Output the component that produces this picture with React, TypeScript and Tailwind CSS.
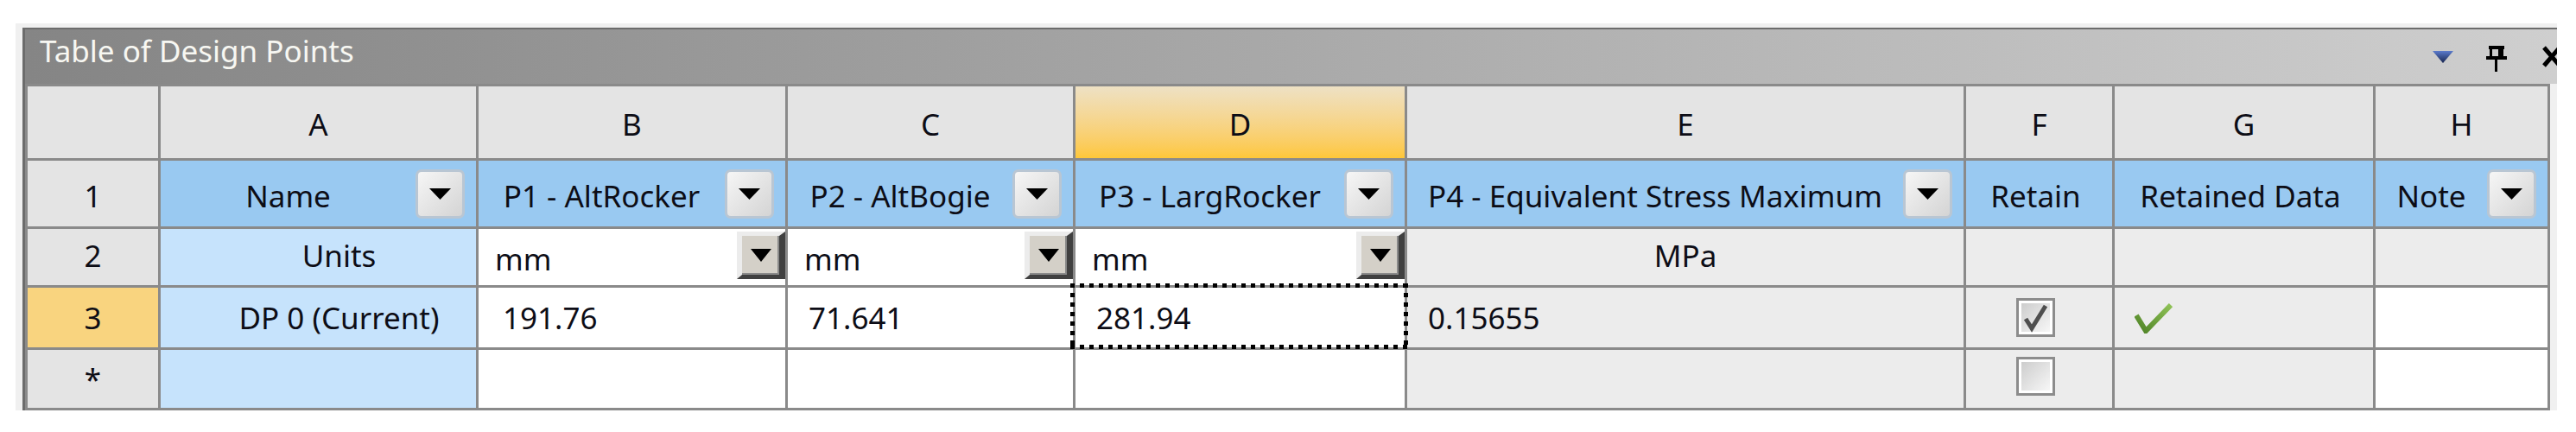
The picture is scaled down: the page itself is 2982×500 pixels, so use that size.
import React from "react";

function HeadDrop() {
  return (
    <div className="mr-[13px] flex h-[57px] w-[57px] shrink-0 items-center justify-center rounded-[7px] border-[3px] border-[#b9c6d3] bg-linear-to-br from-[#f6f6f6] to-[#d4d4d4]">
      <svg width="25" height="13" viewBox="0 0 25 13">
        <polygon points="0,0 25,0 12.5,13" fill="#000" />
      </svg>
    </div>
  );
}

function UnitDrop() {
  return (
    <div className="mt-[3px] flex h-[55px] w-[56px] shrink-0 items-center justify-center self-start border-t-[5px] border-r-[7px] border-b-[5px] border-l-[6px] border-t-[#ececec] border-r-[#404040] border-b-[#404040] border-l-[#ececec] bg-[#d4d0c8] shadow-[inset_-2px_-2px_0_#8a8a8a]">
      <svg width="24" height="15" viewBox="0 0 24 15">
        <polygon points="0,0 24,0 12,15" fill="#000" />
      </svg>
    </div>
  );
}

function Checkbox({ checked }: { checked?: boolean }) {
  return (
    <div className="relative h-[45px] w-[45px] border-[3px] border-[#8c8c8c] bg-white p-[3px]">
      <div className="h-full w-full bg-linear-to-br from-[#cdcdcd] to-[#f7f7f7]" />
      {checked && (
        <svg className="absolute left-0 top-0" width="39" height="39" viewBox="0 0 39 39">
          <path d="M8 21 L15 32 L31 6" fill="none" stroke="#4f4f4f" strokeWidth="5" />
        </svg>
      )}
    </div>
  );
}

function GreenCheck() {
  return (
    <svg width="44" height="36" viewBox="0 0 44 36">
      <defs>
        <linearGradient id="gc" x1="0" y1="1" x2="1" y2="0">
          <stop offset="0" stopColor="#4e8226" />
          <stop offset="1" stopColor="#8fc256" />
        </linearGradient>
      </defs>
      <path d="M2 15 L13 33 L42 3" fill="none" stroke="url(#gc)" strokeWidth="6" />
    </svg>
  );
}

const txt = "text-[35px] leading-[35px] text-[#0d0d16]";

export default function App() {
  const letters = ["A", "B", "C", "D", "E", "F", "G", "H"];
  return (
    <div className="h-[500px] w-[2982px] bg-white pl-[18px] pt-[27px] font-['Noto_Sans',sans-serif]">
      <div className="h-[448px] w-[2942px] overflow-hidden bg-[#f0f0f0] pl-[8px] pt-[5px]">
        <div className="h-full border-l-[3px] border-t-[2px] border-[#6c6c6c]">
          {/* Title bar */}
          <div className="flex h-[63px] items-center bg-linear-to-r from-[#858585] via-[#a9a9a9] to-[#cfcfcf]">
            <span className="pb-[14px] pl-[17px] text-[35px] leading-[35px] text-[#f7f7f2]">
              Table of Design Points
            </span>
            <div className="ml-auto mr-[-6px] flex items-center">
              <svg width="24" height="14" viewBox="0 0 24 14" className="mr-[38px]">
                <defs>
                  <linearGradient id="bt" x1="0" y1="0" x2="0" y2="1">
                    <stop offset="0" stopColor="#5b7bcc" />
                    <stop offset="1" stopColor="#17254f" />
                  </linearGradient>
                </defs>
                <polygon points="0,0 24,0 12,14" fill="url(#bt)" />
              </svg>
              <svg width="24" height="30" viewBox="0 0 24 30" className="mr-[40px] mt-[5px]">
                <rect x="3" y="0" width="18" height="4" fill="#000" />
                <rect x="4" y="0" width="3" height="14" fill="#000" />
                <rect x="14" y="0" width="6" height="14" fill="#000" />
                <rect x="0" y="12" width="24" height="4" fill="#000" />
                <rect x="10" y="16" width="3" height="14" fill="#000" />
              </svg>
              <svg width="24" height="27" viewBox="0 0 24 27">
                <path d="M3 3 L21 24 M21 3 L3 24" stroke="#000" strokeWidth="5" />
              </svg>
            </div>
          </div>

          {/* Grid */}
          <div
            className={`grid w-fit grid-cols-[151px_365px_355px_330px_381px_644px_169px_299px_199px] grid-rows-[83px_76px_65px_69px_67px] gap-[3px] bg-[#8a8a8a] p-[3px] ${txt}`}
          >
            {/* Header row */}
            <div className="bg-[#e4e4e4]" />
            {letters.map((l) => (
              <div
                key={l}
                className={
                  l === "D"
                    ? "flex items-center justify-center bg-linear-to-b from-[#eee1c4] to-[#fec737] pt-[4px]"
                    : "flex items-center justify-center bg-[#e4e4e4] pt-[4px]"
                }
              >
                {l}
              </div>
            ))}

            {/* Row 1 */}
            <div className="flex items-center justify-center bg-[#e4e4e4] pt-[5px]">1</div>
            <div className="flex items-center bg-[#99c9f1]">
              <span className="flex-1 pt-[5px] text-center">Name</span>
              <HeadDrop />
            </div>
            <div className="flex items-center bg-[#99c9f1]">
              <span className="flex-1 pt-[5px] text-center">P1 - AltRocker</span>
              <HeadDrop />
            </div>
            <div className="flex items-center bg-[#99c9f1]">
              <span className="flex-1 pt-[5px] text-center">P2 - AltBogie</span>
              <HeadDrop />
            </div>
            <div className="flex items-center bg-[#99c9f1]">
              <span className="flex-1 pt-[5px] text-center">P3 - LargRocker</span>
              <HeadDrop />
            </div>
            <div className="flex items-center bg-[#99c9f1]">
              <span className="flex-1 pt-[5px] text-center">P4 - Equivalent Stress Maximum</span>
              <HeadDrop />
            </div>
            <div className="flex items-center justify-center bg-[#99c9f1] pr-[8px] pt-[5px]">Retain</div>
            <div className="flex items-center justify-center bg-[#99c9f1] pr-[8px] pt-[5px]">Retained Data</div>
            <div className="flex items-center bg-[#99c9f1]">
              <span className="flex-1 pt-[5px] text-center">Note</span>
              <HeadDrop />
            </div>

            {/* Row 2 */}
            <div className="flex items-center justify-center bg-[#e4e4e4] pb-[4px]">2</div>
            <div className="flex items-center justify-center bg-[#c6e3fc] pb-[4px] pl-[48px]">Units</div>
            <div className="flex items-center bg-white">
              <span className="flex-1 pl-[19px] pt-[4px]">mm</span>
              <UnitDrop />
            </div>
            <div className="flex items-center bg-white">
              <span className="flex-1 pl-[19px] pt-[4px]">mm</span>
              <UnitDrop />
            </div>
            <div className="flex items-center bg-white">
              <span className="flex-1 pl-[19px] pt-[4px]">mm</span>
              <UnitDrop />
            </div>
            <div className="flex items-center justify-center bg-[#ececec] pb-[4px]">MPa</div>
            <div className="bg-[#ececec]" />
            <div className="bg-[#ececec]" />
            <div className="bg-[#ececec]" />

            {/* Row 3 */}
            <div className="flex items-center justify-center bg-[#f9d47f]">3</div>
            <div className="flex items-center justify-center bg-[#c6e3fc] pl-[48px]">DP 0 (Current)</div>
            <div className="flex items-center bg-white pl-[28px]">191.76</div>
            <div className="flex items-center bg-white pl-[24px]">71.641</div>
            <div className="relative flex items-center bg-white pl-[24px]">
              281.94
              <div className="absolute -bottom-[2px] -left-[6px] -right-[4px] -top-[5px]">
                <div className="absolute left-0 right-0 top-0 h-[5px] bg-[repeating-linear-gradient(90deg,#000_0_5px,transparent_5px_11px)]" />
                <div className="absolute bottom-0 left-0 right-0 h-[5px] bg-[repeating-linear-gradient(90deg,#000_0_5px,transparent_5px_11px)]" />
                <div className="absolute bottom-0 left-0 top-0 w-[5px] bg-[repeating-linear-gradient(180deg,#000_0_5px,transparent_5px_11px)]" />
                <div className="absolute bottom-0 right-0 top-0 w-[5px] bg-[repeating-linear-gradient(180deg,#000_0_5px,transparent_5px_11px)]" />
              </div>
            </div>
            <div className="flex items-center bg-[#ececec] pl-[24px]">0.15655</div>
            <div className="flex items-center justify-center bg-[#ececec] pr-[8px]">
              <Checkbox checked />
            </div>
            <div className="flex items-center bg-[#ececec] pl-[23px]">
              <GreenCheck />
            </div>
            <div className="bg-white" />

            {/* Row 4 */}
            <div className="flex items-center justify-center bg-[#e4e4e4]">*</div>
            <div className="bg-[#c6e3fc]" />
            <div className="bg-white" />
            <div className="bg-white" />
            <div className="bg-white" />
            <div className="bg-[#ececec]" />
            <div className="flex items-center justify-center bg-[#ececec] pb-[6px] pr-[8px]">
              <Checkbox />
            </div>
            <div className="bg-[#ececec]" />
            <div className="bg-white" />
          </div>
        </div>
      </div>
    </div>
  );
}
